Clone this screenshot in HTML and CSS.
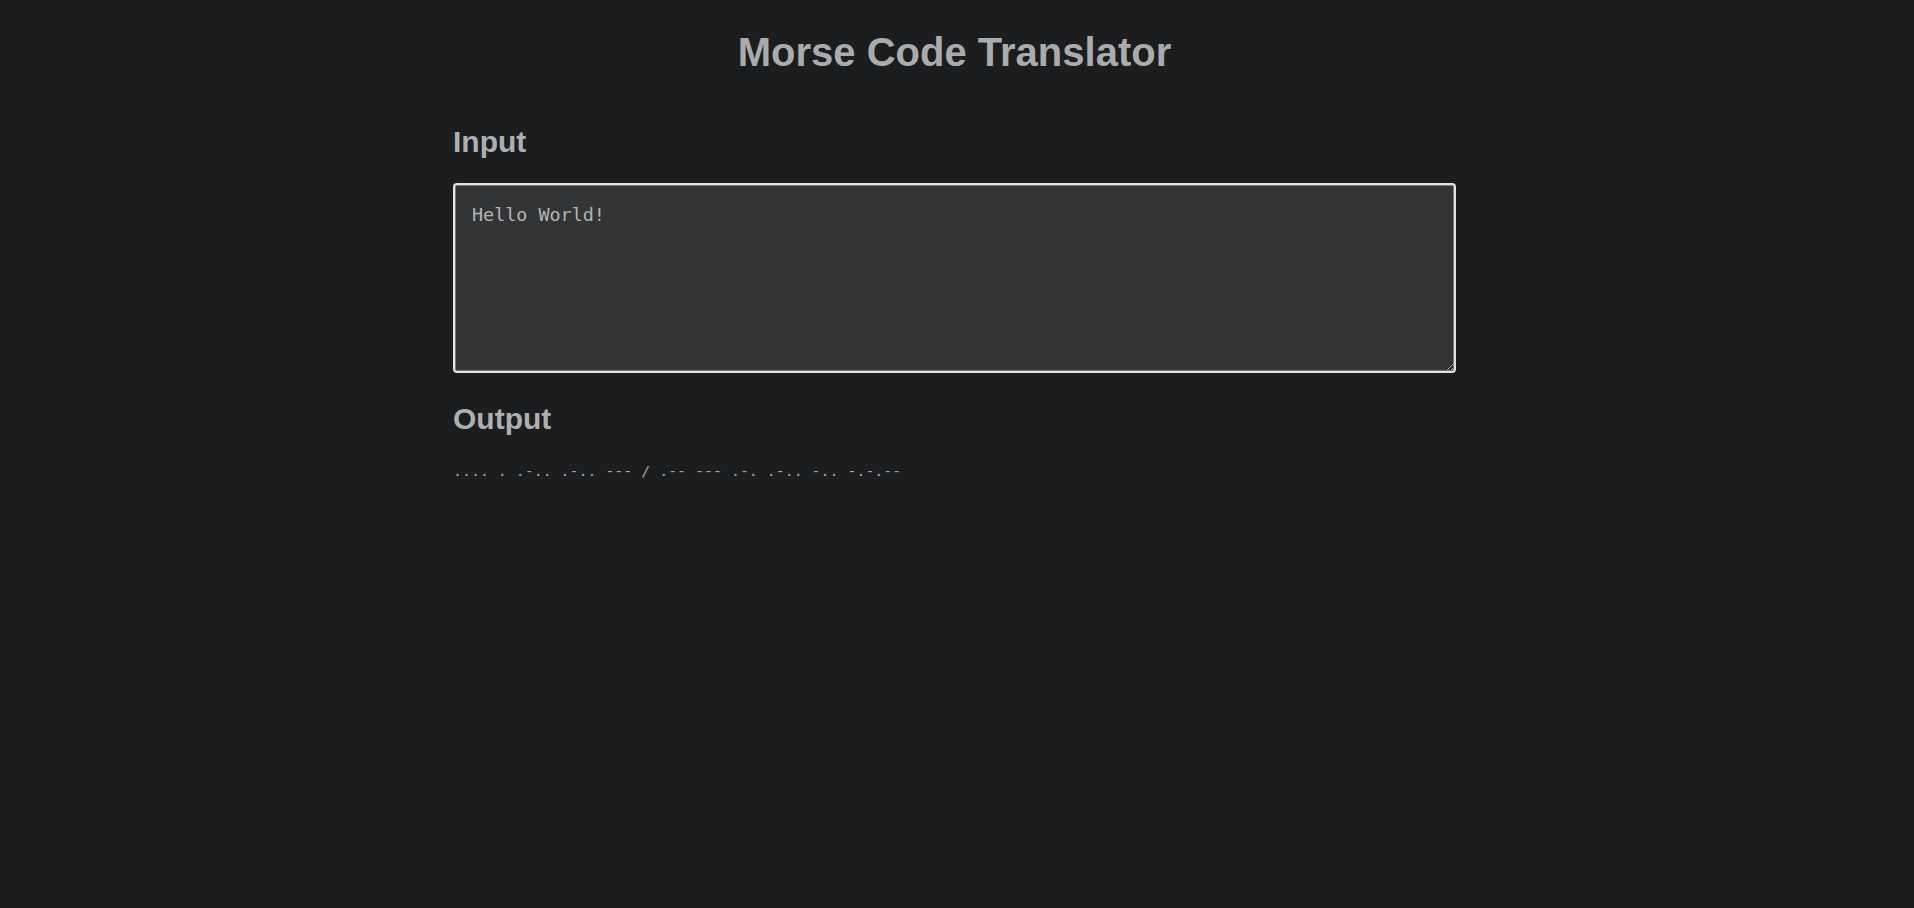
FILE: index.html
```html
<!DOCTYPE html>
<html lang="en">
<head>
<meta charset="utf-8">
<title>Morse Code Translator</title>
<link rel="stylesheet" href="styles.css">
</head>
<body>
<main class="page">
  <h1 class="title">Morse Code Translator</h1>
  <section class="block">
    <h2 class="label">Input</h2>
    <textarea class="input" spellcheck="false">Hello World!</textarea>
  </section>
  <section class="block">
    <h2 class="label label-output">Output</h2>
    <div class="output">.... . .-.. .-.. --- / .-- --- .-. .-.. -.. -.-.--</div>
  </section>
</main>
</body>
</html>
```
FILE: styles.css
```css
html, body {
  margin: 0;
  padding: 0;
  background: #1c1d1f;
  height: 100%;
}

body {
  font-family: "Liberation Sans", Arial, sans-serif;
  color: #a9aaac;
}

.page {
  width: 1003px;
  margin: 0 auto;
  padding: 29px 5px 0 0;
  box-sizing: content-box;
  display: flex;
  flex-direction: column;
}

.title {
  margin: 0 0 49px;
  font-size: 40px;
  line-height: 46px;
  font-weight: bold;
  text-align: center;
  color: #aaabad;
}

.block {
  display: flex;
  flex-direction: column;
}

.label {
  margin: 0 0 24px;
  font-size: 30px;
  line-height: 35px;
  font-weight: bold;
  color: #aeafb1;
}

.label-output {
  margin-top: 28px;
  margin-bottom: 27px;
}

.input {
  display: block;
  width: 100%;
  height: 190px;
  box-sizing: border-box;
  margin: 0;
  padding: 19px 16px 19px 17px;
  font-family: "DejaVu Sans Mono", monospace;
  font-size: 18.4px;
  color: #b4b5b7;
  background: #333436;
  border: 2px solid #e2e2e2;
  border-radius: 4px;
  box-shadow: inset 0 0 0 1px #7a7a7a;
  outline: none;
  resize: both;
}

.output {
  font-family: "DejaVu Sans Mono", monospace;
  font-size: 14.9px;
  line-height: 17px;
  color: #a4a5a7;
  white-space: pre;
}
```
